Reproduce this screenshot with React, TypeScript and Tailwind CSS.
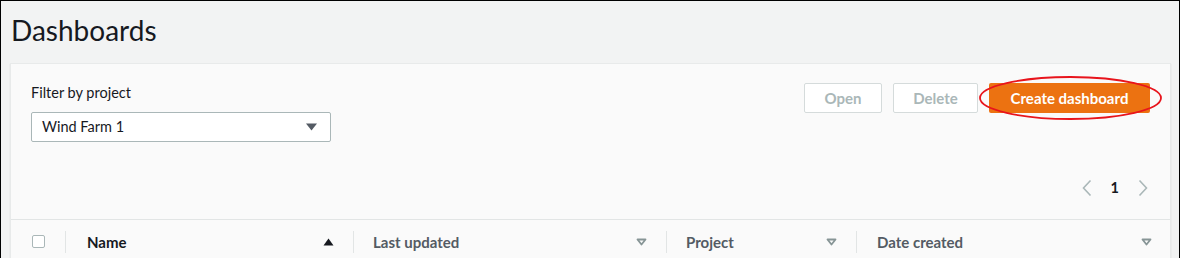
import React from "react";

const font = { fontFamily: "Lato, 'Liberation Sans', sans-serif" };

function SortDown() {
  return (
    <svg width="11" height="8" viewBox="0 0 11 8">
      <path d="M1.5 1.5 L9.5 1.5 L5.5 6.5 Z" fill="none" stroke="#879596" strokeWidth="1.8" strokeLinejoin="round" />
    </svg>
  );
}

function SortUpFilled() {
  return (
    <svg width="11" height="8" viewBox="0 0 11 8">
      <path d="M0.5 7.5 L10.5 7.5 L5.5 0.5 Z" fill="#16191f" />
    </svg>
  );
}

export default function App() {
  return (
    <div className="w-[1180px] h-[258px] overflow-hidden bg-[#f2f3f3] border-l border-t border-r border-black" style={font}>
      <div className="pl-[10px] pt-[11px] h-[62px] text-[28px] leading-[36px] text-[#16191f]">Dashboards</div>
      <div className="ml-[9px] w-[1161px] bg-[#fafafa] border border-[#e8eaea] shadow-[0_1px_1px_rgba(0,28,36,0.15)]">
        <div className="flex justify-between px-[20px] pt-[19px] h-[155px]">
          <div className="flex flex-col">
            <div className="text-[14.5px] leading-[20px] text-[#16191f] mb-[9px]">Filter by project</div>
            <div className="w-[300px] h-[30px] bg-white border border-[#aab7b8] rounded-[2px] flex items-center justify-between pl-[10px] pr-[13px]">
              <span className="text-[14.5px] text-[#16191f]">Wind Farm 1</span>
              <svg width="11" height="8" viewBox="0 0 11 8">
                <path d="M0 0.5 L11 0.5 L5.5 7.5 Z" fill="#545b64" />
              </svg>
            </div>
          </div>
          <div className="flex flex-col items-end">
            <div className="flex items-center gap-[11px] pr-[0px]">
              <div className="w-[78px] h-[30px] border border-[#d5dbdb] bg-white rounded-[2px] flex items-center justify-center text-[15px] font-bold text-[#aab7b8]">Open</div>
              <div className="w-[85px] h-[30px] border border-[#d5dbdb] bg-white rounded-[2px] flex items-center justify-center text-[15px] font-bold text-[#aab7b8]">Delete</div>
              <div className="relative">
                <div className="w-[161px] h-[30px] bg-[#ec7211] rounded-[2px] flex items-center justify-center text-[15px] font-bold text-white">Create dashboard</div>
                <svg className="absolute left-[-11px] top-[-8px]" width="185" height="46" viewBox="0 0 185 46">
                  <ellipse cx="92.5" cy="23" rx="90.5" ry="21" fill="none" stroke="#e8141c" strokeWidth="1.8" />
                </svg>
              </div>
            </div>
            <div className="mt-[64px] mr-[1px] flex items-center gap-[18px]">
              <svg width="12" height="18" viewBox="0 0 12 18">
                <path d="M9.5 1.5 L2.5 9 L9.5 16.5" fill="none" stroke="#aab7b8" strokeWidth="1.6" />
              </svg>
              <span className="text-[14.5px] font-bold text-[#16191f]">1</span>
              <svg width="12" height="18" viewBox="0 0 12 18">
                <path d="M2.5 1.5 L9.5 9 L2.5 16.5" fill="none" stroke="#aab7b8" strokeWidth="1.6" />
              </svg>
            </div>
          </div>
        </div>
        <div className="border-t border-[#e2e5e5] grid grid-cols-[54px_288px_313px_190px_314px] h-[60px]">
          <div className="flex items-start pt-[15px] pl-[21px]">
            <div className="w-[13px] h-[13px] border border-[#aab7b8] rounded-[2px] bg-white" />
          </div>
          <div className="mt-[11px] h-[22px] border-l border-[#e2e5e5] flex items-center justify-between pl-[21px] pr-[19px]">
            <span className="text-[15px] font-bold text-[#16191f]">Name</span>
            <SortUpFilled />
          </div>
          <div className="mt-[11px] h-[22px] border-l border-[#e2e5e5] flex items-center justify-between pl-[19px] pr-[19px]">
            <span className="text-[15px] font-bold text-[#545b64]">Last updated</span>
            <SortDown />
          </div>
          <div className="mt-[11px] h-[22px] border-l border-[#e2e5e5] flex items-center justify-between pl-[19px] pr-[19px]">
            <span className="text-[15px] font-bold text-[#545b64]">Project</span>
            <SortDown />
          </div>
          <div className="mt-[11px] h-[22px] border-l border-[#e2e5e5] flex items-center justify-between pl-[20px] pr-[18px]">
            <span className="text-[15px] font-bold text-[#545b64]">Date created</span>
            <SortDown />
          </div>
        </div>
      </div>
    </div>
  );
}
